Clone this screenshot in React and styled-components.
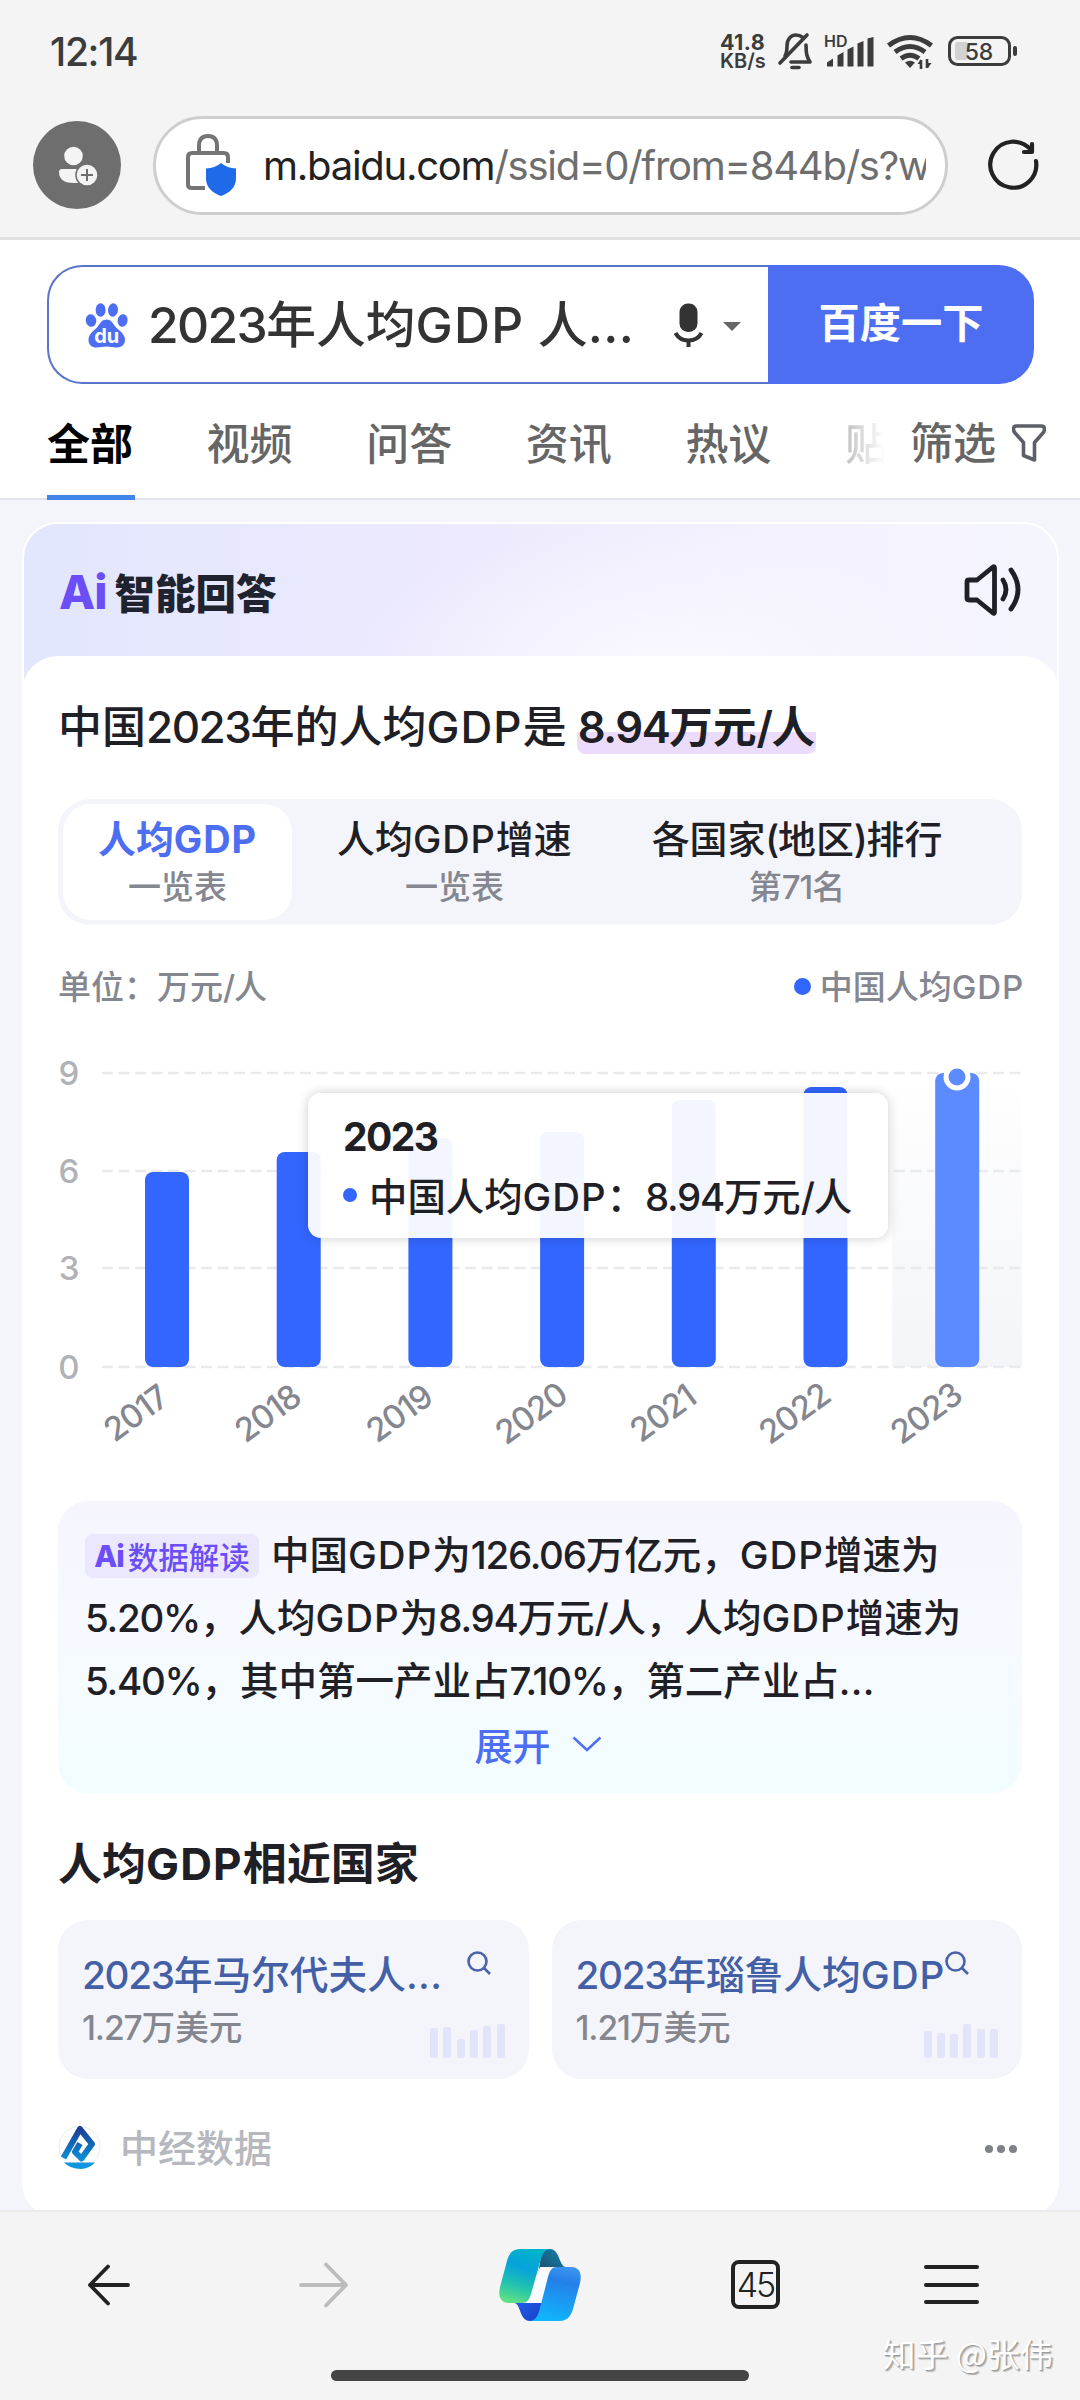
import React from 'react'
import styled, { createGlobalStyle } from 'styled-components'

const GlobalStyle = createGlobalStyle`
  * { box-sizing: border-box; }
  body {
    margin: 0;
    background: #f4f4f4;
    font-family: Inter, "Noto Sans CJK SC", sans-serif;
    -webkit-font-smoothing: antialiased;
  }
  svg { display: block; flex: none; }
`

const bars = [
  { year: '2017', top: 1172 },
  { year: '2018', top: 1152 },
  { year: '2019', top: 1138 },
  { year: '2020', top: 1132 },
  { year: '2021', top: 1100 },
  { year: '2022', top: 1087 },
  { year: '2023', top: 1073 },
]
const grid = [
  { label: '9', y: 1073 },
  { label: '6', y: 1171 },
  { label: '3', y: 1268 },
  { label: '0', y: 1367 },
]
const tabs = ['全部', '视频', '问答', '资讯', '热议']
const segments = [
  { title: '人均GDP', sub: '一览表', active: true },
  { title: '人均GDP增速', sub: '一览表' },
  { title: '各国家(地区)排行', sub: '第71名' },
]
const countries = [
  { title: '2023年马尔代夫人...', value: '1.27万美元', mini: [30, 31, 19, 28, 32, 34], gap: 25 },
  { title: '2023年瑙鲁人均GDP', value: '1.21万美元', mini: [27, 25, 24, 34, 29, 29], gap: 0 },
]

// digits sit tighter than the hanzi around them, capitals a bit looser
const trackOf = (part) => {
  if (/^[A-Z]+$/.test(part)) return '0.026em'
  if (part === '...') return '0.01em'
  return '-0.033em'
}
const Mixed = ({ children }) =>
  children.split(/([A-Z]+|\.{3}|[\x21-\x40\x5b-\x7e]+)/).map((part, i) =>
    i % 2 ? <Latin key={i} $track={trackOf(part)}>{part}</Latin> : part
  )

const PawLogo = () => (
  <svg width="44" height="46" viewBox="0 0 44 46" fill="#4e6ef2">
    <ellipse cx="6" cy="18.500" rx="5.200" ry="6.300" transform="rotate(-10 6 18.500)" />
    <ellipse cx="15.600" cy="8" rx="5" ry="6.700" />
    <ellipse cx="28" cy="8" rx="5" ry="6.700" transform="rotate(6 28 8)" />
    <ellipse cx="37.600" cy="18.500" rx="5" ry="6.300" transform="rotate(10 37.600 18.500)" />
    <path d="M21.500 17.500c4 0 6 3 8 6 3 4.500 10.500 7.500 10.500 14.500 0 5-4 7.500-8.500 7.500-4 0-6-1-10-1s-6 1-10 1C7 45.500 3.500 43 3.500 38c0-7 7-10 10-14.500 2-3 4-6 8-6z" />
    <text x="21.700" y="41" fontSize="20" fontWeight="700" fill="#fff" textAnchor="middle" fontFamily="Inter, sans-serif">du</text>
  </svg>
)

const StatusIcons = () => (
  <svg width="252" height="44" viewBox="774 30 252 44" fill="none" stroke="#3c3c3c">
    <g strokeWidth="3.600" strokeLinejoin="round" strokeLinecap="round">
      <path d="M785 56c2-3 2-6 2-10 0-7 4-11 9-11 3 0 5 1 7 2.500M806 45c0 9 1 12 4 17h-19" />
      <path d="M780 63l27-28" />
      <path d="M792 67.500h7" />
    </g>
    <g fill="#3c3c3c" stroke="none">
      <path d="M827 66.500v-4l6-4v8zM837.500 66.500v-11l6-3.500v14.500zM847.500 66.500v-17l6-3v20zM857.500 66.500v-23l6-2.500v25.500zM867.500 66.500v-28l6-1.500v29.500z" />
      <path d="M905 62.500q5-3.500 10 0l-5 5.500z" />
      <path d="M921 68v-9l-3.500 5h3.500M928 59v9l3.500-5h-3.500" />
    </g>
    <g strokeWidth="5">
      <path d="M888.500 45.500q21.500-16 43 0" />
      <path d="M895 52q15-11 30 0" />
      <path d="M901 58.500q9-6.500 18 0" />
    </g>
    <path d="M921 60v9M927 59v9" strokeWidth="2.600" />
    <rect x="949.500" y="37.500" width="60" height="27" rx="8" strokeWidth="3" />
    <rect x="955" y="42" width="13" height="18" rx="3" fill="#d2d2d2" stroke="none" />
    <rect x="1013" y="46" width="4" height="10" rx="2" fill="#3c3c3c" stroke="none" />
    <text x="824" y="47" fontSize="16" fontWeight="600" fill="#3c3c3c" stroke="none" fontFamily="Inter, sans-serif">HD</text>
    <text x="979" y="60" fontSize="23" fontWeight="500" fill="#3c3c3c" stroke="none" textAnchor="middle" fontFamily="Inter, sans-serif">58</text>
  </svg>
)

const ProfileIcon = () => (
  <svg width="88" height="88" viewBox="33 121 88 88">
    <circle cx="77" cy="165" r="44" fill="#6e6e6e" />
    <circle cx="73.500" cy="156" r="9.300" fill="#f4f4f4" />
    <path d="M62 169h20v14H74c-9 0-15-3-15-11q0-3 3-3z" fill="#f4f4f4" />
    <circle cx="87" cy="175" r="11.800" fill="#6e6e6e" />
    <circle cx="87" cy="175" r="10.300" fill="#f4f4f4" />
    <path d="M87 169v12M81 175h12" stroke="#6e6e6e" strokeWidth="2" />
  </svg>
)

const LockIcon = () => (
  <svg width="52" height="64" viewBox="186 137 52 64">
    <g fill="none" stroke="#757575" strokeWidth="4">
      <path d="M200 157v-7q0-10 9-10t9 10v7" />
      <path d="M229 167v-6q0-4-4-4h-32q-4 0-4 4v28q0 3 4 3h13" />
    </g>
    <path d="M222 167q6 5 15 5.500v10c0 10-8 15-15 17.500-7-2.500-15-7.500-15-17.500v-10q9-.5 15-5.500z" fill="#1f6ae9" />
  </svg>
)

const ReloadIcon = () => (
  <svg width="54" height="54" viewBox="987 139 54 54" fill="none" stroke="#222" strokeWidth="4.200" strokeLinecap="round" strokeLinejoin="round">
    <path d="M1037 162a23 23 0 1 1-5-11M1033 145v8h-8" />
  </svg>
)

const MicIcon = () => (
  <svg width="30" height="44" viewBox="0 0 30 44" fill="#333">
    <rect x="5.500" y="0.500" width="18" height="28.500" rx="8.500" />
    <path d="M1.500 30q4 7.500 13 7.500t13-7.500" fill="none" stroke="#333" strokeWidth="4" />
    <path d="M14.500 36v8" stroke="#333" strokeWidth="4" />
  </svg>
)

const FilterIcon = () => (
  <svg width="34" height="38" viewBox="0 0 34 38" fill="none" stroke="#5c5f66" strokeWidth="3.600" strokeLinejoin="round">
    <path d="M4.500 2h25q3 0 3 3 0 2.500-2 4.500l-8 9V36l-11-4.500V18.500l-8-9q-2-2-2-4.500 0-3 3-3z" />
  </svg>
)

const SpeakerIcon = () => (
  <svg width="58" height="54" viewBox="964 564 58 54" fill="none" stroke="#1f2026" strokeWidth="4.800" strokeLinejoin="round" strokeLinecap="round">
    <path d="M967 583q0-2 2-2h8l16-13q1.500-1 1.500 1v44q0 2-1.500 1l-16-13h-8q-2 0-2-2z" />
    <path d="M1003 581q6 9.500 0 19M1011 571q14 19.500 0 39" />
  </svg>
)

const SearchIcon = () => (
  <svg width="24" height="24" viewBox="0 0 24 24" fill="none" stroke="#4a63a8" strokeWidth="2.600">
    <circle cx="10.500" cy="10.500" r="9" />
    <path d="M16.500 16.500L23 23" />
  </svg>
)

const SourceLogo = () => (
  <svg width="43" height="44" viewBox="0 0 43 44">
    <defs>
      <linearGradient id="src" x1="0" y1="0" x2="0" y2="1">
        <stop offset="0" stopColor="#1c3f94" />
        <stop offset="1" stopColor="#0b8ed6" />
      </linearGradient>
    </defs>
    <circle cx="21.500" cy="22" r="20.500" fill="#fff" stroke="#ebebeb" />
    <path d="M5.500 33L22 4l12 15-10.500 14.500-6.500-6.500 5-8.500" fill="none" stroke="url(#src)" strokeWidth="6" strokeLinejoin="round" />
    <path d="M6 37.500h31q-6 6.500-14 6.500-11 0-17-6.500z" fill="#1295dc" />
  </svg>
)

const CopilotLogo = () => (
  <svg width="84" height="74" viewBox="0 0 84 74">
    <defs>
      <linearGradient id="cpA" x1=".6" y1="0" x2=".3" y2="1">
        <stop offset="0" stopColor="#00b4c8" />
        <stop offset=".35" stopColor="#05a2dc" />
        <stop offset=".7" stopColor="#22c3ae" />
        <stop offset="1" stopColor="#5fe083" />
      </linearGradient>
      <linearGradient id="cpB" x1=".6" y1="0" x2=".4" y2="1">
        <stop offset="0" stopColor="#3a93f0" />
        <stop offset=".25" stopColor="#2480e8" />
        <stop offset="1" stopColor="#10b6fd" />
      </linearGradient>
      <linearGradient id="cpC" x1="0" y1="1" x2="1" y2="0">
        <stop offset="0" stopColor="#174a66" />
        <stop offset="1" stopColor="#1783b0" />
      </linearGradient>
      <linearGradient id="cpD" x1="0" y1="0" x2="1" y2="1">
        <stop offset="0" stopColor="#2563f0" />
        <stop offset="1" stopColor="#1540c4" />
      </linearGradient>
    </defs>
    <path d="M44 1h8c10 0 9 18 16 18H52l-12 8z" fill="url(#cpC)" />
    <path d="M40 73h-8c-11 0-9-18-16-18h16l13-8z" fill="url(#cpD)" />
    <path d="M42 19h14L45 55H29z" fill="#fbfcff" />
    <path d="M22 1h31c-7 0-9 6-11 13l-9 32c-2 6-4 9-9 9H11C2 55 0 48 2 39L9 13C11 6 14 1 22 1z" fill="url(#cpA)" />
    <path d="M62 73H31c7 0 9-6 11-13l8-31c2-7 4-10 9-10h14c9 0 11 7 9 16l-7 26c-2 7-6 12-13 12z" fill="url(#cpB)" />
  </svg>
)

// drawn in page coordinates, the plot starts right below the legend row
const Chart = () => (
  <svg width="1000" height="440" viewBox="40 1030 1000 440">
    <defs>
      <linearGradient id="band" x1="0" y1="0" x2="0" y2="1">
        <stop offset="0" stopColor="#fff" />
        <stop offset="1" stopColor="#f4f5f9" />
      </linearGradient>
    </defs>
    <rect x="892" y="1073" width="130" height="294" fill="url(#band)" />
    {grid.map((g) => (
      <g key={g.label}>
        <line x1="102" x2="1022" y1={g.y} y2={g.y} stroke="#e9eaee" strokeWidth="2.500" strokeDasharray="11 5.500" />
        <text x="69" y={g.y + 11.500} fontSize="33" fill="#b0b2b8" textAnchor="middle" fontWeight="500">{g.label}</text>
      </g>
    ))}
    {bars.map((b, i) => {
      const x = 145 + i * 131.7
      return (
        <g key={b.year}>
          <rect x={x} y={b.top} width="44" height={1367 - b.top} rx="8" fill={i === 6 ? '#5b8bff' : '#3366ff'} />
          <text
            x="0" y="12" fontSize="33" letterSpacing="-1.200" fontWeight="500" fill="#858790" textAnchor="middle"
            transform={`translate(${x - 9.5} 1413) rotate(-36)`}
          >{b.year}</text>
        </g>
      )
    })}
    <circle cx="957" cy="1077" r="13.500" fill="#fff" />
    <circle cx="957" cy="1077" r="8.500" fill="#5b8bff" />
  </svg>
)

const App = () => (
  <Screen>
    <GlobalStyle />
    <StatusBar>
      <Clock>12:14</Clock>
      <Speed><b>41.8</b><span>KB/s</span></Speed>
      <StatusIcons />
    </StatusBar>

    <BrowserBar>
      <ProfileIcon />
      <UrlPill>
        <LockIcon />
        <Url><b>m.baidu.com</b>/ssid=0/from=844b/s?w</Url>
      </UrlPill>
      <ReloadIcon />
    </BrowserBar>

    <SearchArea>
      <SearchBox>
        <Query>
          <PawLogo />
          <QueryText><Mixed>2023年人均GDP 人...</Mixed></QueryText>
          <MicIcon />
          <Caret />
        </Query>
        <SearchButton>百度一下</SearchButton>
      </SearchBox>
      <Tabs>
        {tabs.map((t, i) => <Tab key={t} $active={i === 0}>{t}</Tab>)}
        <FadedTab>贴</FadedTab>
        <Filter>筛选<FilterIcon /></Filter>
      </Tabs>
    </SearchArea>

    <Results>
      <AnswerCard>
        <AnswerHead>
          <Brand><AiMark>Ai</AiMark>智能回答</Brand>
          <SpeakerIcon />
        </AnswerHead>
        <AnswerBody>
          <Headline>
            <Mixed>中国2023年的人均GDP是</Mixed>
            <Mark><Mixed>8.94万元/人</Mixed></Mark>
          </Headline>
          <Segments>
            {segments.map((s) => (
              <Segment key={s.title} $active={s.active}>
                <SegTitle $active={s.active}><Mixed>{s.title}</Mixed></SegTitle>
                <SegSub><Mixed>{s.sub}</Mixed></SegSub>
              </Segment>
            ))}
          </Segments>
          <LegendRow>
            <span><Mixed>单位：万元/人</Mixed></span>
            <Legend><Dot $size={17} /><span><Mixed>中国人均GDP</Mixed></span></Legend>
          </LegendRow>
          <ChartWrap>
            <Chart />
            <Tooltip>
              <TipTitle>2023</TipTitle>
              <TipRow><Dot $size={14} /><span><Mixed>中国人均GDP：8.94万元/人</Mixed></span></TipRow>
            </Tooltip>
          </ChartWrap>
          <Insight>
            <InsightLine>
              <Badge><AiMark $small>Ai</AiMark>数据解读</Badge>
              <InsightText><Mixed>中国GDP为126.06万亿元，GDP增速为</Mixed></InsightText>
            </InsightLine>
            <InsightLine><InsightText><Mixed>5.20%，人均GDP为8.94万元/人，人均GDP增速为</Mixed></InsightText></InsightLine>
            <InsightLine><InsightText><Mixed>5.40%，其中第一产业占7.10%，第二产业占...</Mixed></InsightText></InsightLine>
            <Expand>
              展开
              <svg width="30" height="16" viewBox="0 0 30 16" fill="none" stroke="#4e6ef2" strokeWidth="2.400"><path d="M1.500 1.500L15 14 28.500 1.500" /></svg>
            </Expand>
          </Insight>
          <SectionTitle><Mixed>人均GDP相近国家</Mixed></SectionTitle>
          <CountryRow>
            {countries.map((c) => (
              <Country key={c.title}>
                <CountryTitle $gap={c.gap}><span><Mixed>{c.title}</Mixed></span><SearchIcon /></CountryTitle>
                <CountryValue><Mixed>{c.value}</Mixed></CountryValue>
                <MiniBars>
                  {c.mini.map((h, i) => <i key={i} style={{ height: h }} />)}
                </MiniBars>
              </Country>
            ))}
          </CountryRow>
          <Source>
            <SourceLogo />
            <span>中经数据</span>
            <More><i /><i /><i /></More>
          </Source>
        </AnswerBody>
      </AnswerCard>
    </Results>

    <BottomNav>
      <BackButton>
        <svg width="44" height="42" viewBox="0 0 44 42" fill="none" stroke="#222" strokeWidth="3.800" strokeLinecap="round" strokeLinejoin="round">
          <path d="M21 2.500L3 21l18 18.500M3 21h38" />
        </svg>
      </BackButton>
      <svg width="50" height="46" viewBox="0 0 50 46" fill="none" stroke="#bcbcbc" strokeWidth="3.800" strokeLinecap="round" strokeLinejoin="round">
        <path d="M27 2.500L47 23 27 43.500M47 23H2" />
      </svg>
      <CopilotLogo />
      <TabCount>45</TabCount>
      <Menu><i /><i /><i /></Menu>
      <Watermark>知乎 @张伟</Watermark>
      <HomeBar />
    </BottomNav>
  </Screen>
)

const Latin = styled.span`
  letter-spacing: ${({ $track }) => $track};
`
const Screen = styled.div`
  width: 1080px;
  height: 2400px;
  overflow: hidden;
  display: flex;
  flex-direction: column;
  background: #f4f4f4;
`
const StatusBar = styled.div`
  height: 104px;
  padding-left: 50px;
  display: flex;
  align-items: center;
  color: #3c3c3c;
`
const Clock = styled.div`
  width: 670px;
  padding-bottom: 2px;
  font-size: 39px;
  font-weight: 500;
  letter-spacing: -1.300px;
`
const Speed = styled.div`
  width: 54px;
  padding-bottom: 1px;
  display: flex;
  flex-direction: column;
  font-size: 20px;
  line-height: 19px;
  font-weight: 600;
  b { font-size: 21.500px; letter-spacing: 0.4px; font-weight: 700; }
`
const BrowserBar = styled.div`
  height: 136px;
  padding: 0 40px 11px 33px;
  display: flex;
  align-items: center;
  justify-content: space-between;
  border-bottom: 3px solid #e0e0e0;
  & > svg:last-child { margin-left: 6px; }
`
const UrlPill = styled.div`
  width: 795px;
  height: 99px;
  padding: 0 19px 0 29px;
  display: flex;
  align-items: center;
  gap: 26px;
  border: 3px solid #cecece;
  border-radius: 50px;
  background: #fff;
`
const Url = styled.div`
  flex: 1;
  overflow: hidden;
  white-space: nowrap;
  font-size: 40px;
  letter-spacing: -1.250px;
  color: #6e6e6e;
  b { font-weight: 400; color: #222; }
`
const SearchArea = styled.div`
  height: 260px;
  padding: 25px 34px 0 47px;
  background: #fff;
  border-bottom: 2px solid #e1e4e8;
`
const SearchBox = styled.div`
  width: 987px;
  height: 119px;
  display: flex;
`
const Query = styled.div`
  width: 721px;
  padding-left: 36px;
  display: flex;
  align-items: center;
  border: 2px solid #5a74cc;
  border-right: 0;
  border-radius: 35px 0 0 35px;
`
const QueryText = styled.div`
  width: 526px;
  margin-left: 19px;
  padding-bottom: 8px;
  font-size: 49.800px;
  font-weight: 500;
  color: #333;
  white-space: nowrap;
`
const Caret = styled.i`
  margin: 4px 0 0 19px;
  border: 9px solid transparent;
  border-top-color: #666;
  border-bottom: 0;
`
const SearchButton = styled.div`
  flex: 1;
  padding-bottom: 9px;
  display: flex;
  align-items: center;
  justify-content: center;
  border-radius: 0 35px 35px 0;
  background: #4e6ef2;
  color: #fff;
  font-size: 41.300px;
  font-weight: 700;
`
const Tabs = styled.div`
  height: 114px;
  margin-top: 2px;
  display: flex;
  font-size: 43px;
  font-weight: 500;
`
const Tab = styled.div`
  width: 88px;
  height: 114px;
  margin-right: 71.600px;
  flex: none;
  line-height: 116px;
  white-space: nowrap;
  font-weight: ${({ $active }) => ($active ? 700 : 500)};
  color: ${({ $active }) => ($active ? '#000' : '#666')};
  border-bottom: 5px solid ${({ $active }) => ($active ? '#4285e8' : 'transparent')};
`
const FadedTab = styled.div`
  width: 40px;
  overflow: hidden;
  line-height: 116px;
  background: linear-gradient(90deg, #c0c0c0, #fff);
  background-clip: text;
  color: transparent;
`
const Filter = styled.div`
  margin-left: auto;
  display: flex;
  align-items: center;
  gap: 16px;
  line-height: 116px;
  color: #666;
`
const Results = styled.div`
  height: 1710px;
  padding: 22px 21px 0 22px;
  background: #f4f5fa;
  overflow: hidden;
`
const AnswerCard = styled.div`
  border-radius: 36px;
  border: 2px solid #fff;
  background:
    radial-gradient(ellipse 320px 150px at 640px 150px, #faf9ff, transparent) 0 0 / 100% 200px no-repeat,
    linear-gradient(90deg, #e2e7fe 0%, #ece9fd 40%, #f3f1fe 70%, #f5f5fe 100%) 0 0 / 100% 200px no-repeat;
`
const AnswerHead = styled.div`
  height: 132px;
  padding: 0 35px 0 35px;
  display: flex;
  align-items: center;
  justify-content: space-between;
`
const Brand = styled.div`
  padding-top: 2px;
  display: flex;
  align-items: center;
  font-size: 40.500px;
  font-weight: 900;
  color: #1f2330;
`
const AiMark = styled.span`
  margin-right: ${({ $small }) => ($small ? 4 : 8)}px;
  font-size: ${({ $small }) => ($small ? 30 : 47)}px;
  font-weight: 800;
  letter-spacing: -1px;
  color: #6c4ef6;
`
const AnswerBody = styled.div`
  height: 1560px;
  margin: 0 -2px;
  padding: 0 37px 0 36px;
  border-radius: 36px;
  background: #fff;
  color: #1f2026;
`
const Headline = styled.div`
  height: 143px;
  padding-top: 32px;
  line-height: 79px;
  font-size: 44px;
  font-weight: 500;
  white-space: nowrap;
`
const Mark = styled.b`
  margin-left: 10px;
  padding: 0 1px;
  font-size: 43.600px;
  font-weight: 600;
  border-radius: 8px;
  background: linear-gradient(#ecdcfb, #ecdcfb) 0 100% / 100% 22px no-repeat;
`
const Segments = styled.div`
  height: 126px;
  padding: 5px;
  display: flex;
  gap: 10px;
  border-radius: 32px;
  background: #f4f5fa;
`
const Segment = styled.div`
  padding: 9px 35px 0;
  text-align: center;
  white-space: nowrap;
  border-radius: 28px;
  background: ${({ $active }) => ($active ? '#fff' : 'transparent')};
`
const SegTitle = styled.div`
  height: 52px;
  line-height: 52px;
  font-size: 37.900px;
  font-weight: ${({ $active }) => ($active ? 700 : 500)};
  color: ${({ $active }) => ($active ? '#4e6ef2' : '#1f2026')};
`
const SegSub = styled.div`
  line-height: 44px;
  font-size: 33px;
  font-weight: 500;
  color: #858790;
`
const LegendRow = styled.div`
  height: 105px;
  padding-top: 14px;
  display: flex;
  align-items: center;
  justify-content: space-between;
  font-size: 33px;
  font-weight: 500;
  color: #858790;
  i { margin-top: 3px; }
`
const Legend = styled.div`
  margin-right: -2px;
  display: flex;
  align-items: center;
  gap: 9px;
`
const Dot = styled.i`
  width: ${({ $size }) => $size}px;
  height: ${({ $size }) => $size}px;
  flex: none;
  border-radius: 50%;
  background: #3366ff;
`
const ChartWrap = styled.div`
  position: relative;
  height: 471px;
  & > svg { margin-left: -18px; }
`
const Tooltip = styled.div`
  position: absolute;
  left: 250px;
  top: 63px;
  width: 580px;
  height: 145px;
  padding: 19px 0 0 35px;
  border-radius: 13px;
  background: rgba(255, 255, 255, 0.94);
  box-shadow: 0 0 12px rgba(0, 0, 0, 0.2);
  white-space: nowrap;
`
const TipTitle = styled.div`
  line-height: 50px;
  font-size: 39px;
  font-weight: 700;
  letter-spacing: -1.600px;
`
const TipRow = styled.div`
  height: 66px;
  display: flex;
  align-items: center;
  gap: 12px;
  font-size: 38.400px;
  font-weight: 500;
  span { padding-bottom: 3px; }
`
const Insight = styled.div`
  height: 292px;
  padding: 22px 27px;
  border-radius: 30px;
  background: linear-gradient(#f6f5fe, #f6faff 50%, #f2fdff);
`
const InsightLine = styled.div`
  height: 63px;
  display: flex;
  align-items: center;
  font-size: 38.500px;
  font-weight: 500;
  white-space: nowrap;
`
const InsightText = styled.span`
  padding-bottom: 6px;
`
const Badge = styled.div`
  width: 174px;
  height: 44px;
  margin: 3px 12px 0 0;
  display: flex;
  align-items: center;
  justify-content: center;
  border-radius: 8px;
  background: #ebe7fc;
  font-size: 30.500px;
  color: #6c4ef6;
`
const Expand = styled.div`
  height: 63px;
  padding-right: 4px;
  display: flex;
  align-items: center;
  justify-content: center;
  gap: 21px;
  font-size: 38px;
  font-weight: 500;
  color: #4e6ef2;
`
const SectionTitle = styled.div`
  height: 127px;
  line-height: 143px;
  font-size: 44px;
  font-weight: 700;
`
const CountryRow = styled.div`
  display: flex;
  gap: 23px;
`
const Country = styled.div`
  position: relative;
  flex: 1;
  height: 159px;
  padding: 28px 24px 0;
  border-radius: 30px;
  background: #f4f5fa;
  white-space: nowrap;
`
const CountryTitle = styled.div`
  height: 54px;
  display: flex;
  align-items: flex-start;
  gap: ${({ $gap }) => $gap}px;
  line-height: 54px;
  font-size: 38.700px;
  font-weight: 500;
  color: #435fa6;
  svg { margin-top: 3px; }
`
const CountryValue = styled.div`
  line-height: 52px;
  font-size: 33.600px;
  font-weight: 500;
  color: #858790;
`
const MiniBars = styled.div`
  position: absolute;
  right: 24px;
  bottom: 21px;
  display: flex;
  align-items: flex-end;
  gap: 5.300px;
  i { width: 8px; border-radius: 2px; background: #e2e5f9; }
`
const Source = styled.div`
  height: 136px;
  display: flex;
  align-items: center;
  font-size: 38px;
  font-weight: 500;
  color: #b6b8be;
  span { margin-left: 19px; padding-bottom: 4px; }
`
const More = styled.div`
  margin: 3px 5px 0 auto;
  display: flex;
  gap: 4px;
  i { width: 8px; height: 8px; border-radius: 50%; background: #7f8188; }
`
const BottomNav = styled.div`
  position: relative;
  height: 190px;
  padding: 0 101px 43px 87px;
  display: flex;
  align-items: center;
  gap: 149px;
  border-top: 2px solid #ebebeb;
`
const BackButton = styled.div`
  margin-right: 19px;
`
const TabCount = styled.div`
  width: 49px;
  height: 49px;
  display: flex;
  align-items: center;
  justify-content: center;
  border: 4px solid #222;
  border-radius: 8px;
  font-size: 34px;
  font-weight: 300;
  letter-spacing: -2px;
  color: #222;
`
const Menu = styled.div`
  margin-left: -5px;
  display: grid;
  gap: 13.500px;
  i { width: 55px; height: 4px; border-radius: 2px; background: #222; }
`
const Watermark = styled.div`
  position: absolute;
  right: 27px;
  bottom: 23px;
  font-family: "Noto Sans CJK SC", sans-serif;
  font-size: 33px;
  color: #fff;
  text-shadow: 1px 1px 1px #999, 2px 2px 1px #bbb;
`
const HomeBar = styled.div`
  position: absolute;
  left: 331px;
  bottom: 19px;
  width: 418px;
  height: 11px;
  border-radius: 6px;
  background: #444;
`

export default App
